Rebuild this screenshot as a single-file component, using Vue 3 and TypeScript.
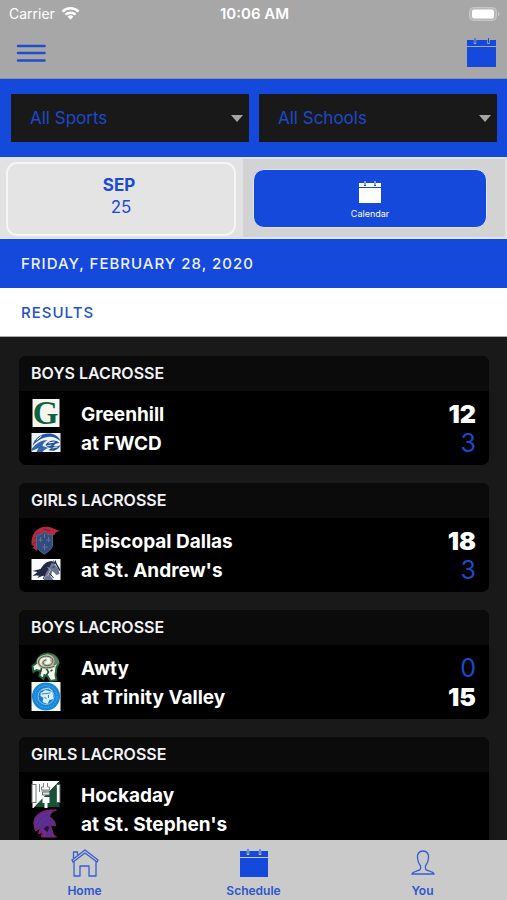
<script setup lang="ts">
import { ref } from 'vue'

type Logo = 'greenhill' | 'fwcd' | 'episcopal' | 'andrews' | 'awty' | 'trinity' | 'hockaday' | 'stephens'

interface Side {
  name: string
  logo: Logo
  score?: number
  won?: boolean
}

interface Game {
  id: number
  sport: string
  sides: Side[]
}

const sport = ref('All Sports')
const school = ref('All Schools')

const games: Game[] = [
  {
    id: 1,
    sport: 'BOYS LACROSSE',
    sides: [
      { name: 'Greenhill', logo: 'greenhill', score: 12, won: true },
      { name: 'at FWCD', logo: 'fwcd', score: 3 },
    ],
  },
  {
    id: 2,
    sport: 'GIRLS LACROSSE',
    sides: [
      { name: 'Episcopal Dallas', logo: 'episcopal', score: 18, won: true },
      { name: "at St. Andrew's", logo: 'andrews', score: 3 },
    ],
  },
  {
    id: 3,
    sport: 'BOYS LACROSSE',
    sides: [
      { name: 'Awty', logo: 'awty', score: 0 },
      { name: 'at Trinity Valley', logo: 'trinity', score: 15, won: true },
    ],
  },
  {
    id: 4,
    sport: 'GIRLS LACROSSE',
    sides: [
      { name: 'Hockaday', logo: 'hockaday' },
      { name: "at St. Stephen's", logo: 'stephens' },
    ],
  },
]
</script>

<template>
  <div class="screen">
    <header class="top">
      <div class="status">
        <span class="carrier">
          Carrier
          <svg class="wifi" viewBox="0 0 20 15" aria-hidden="true">
            <path d="M1.5 5.6a12 12 0 0 1 17 0" />
            <path d="M4.7 8.8a7.5 7.5 0 0 1 10.6 0" />
            <path class="solid" d="M10 14l-3-3.1a4.3 4.3 0 0 1 6 0z" />
          </svg>
        </span>
        <span class="clock">10:06 AM</span>
        <svg class="battery" viewBox="0 0 31 14" aria-hidden="true">
          <rect x="0.5" y="0.5" width="27" height="13" rx="4" fill="#b9b9b9" stroke="#c6c6c6" />
          <rect x="3" y="2.500" width="22" height="9" rx="2.500" fill="#fff" />
          <path d="M29 5c2 .6 2 3.400 0 4z" fill="#c6c6c6" />
        </svg>
      </div>
      <div class="nav">
        <button class="icon-button" type="button" aria-label="Menu">
          <svg class="menu-icon" viewBox="0 0 30 18">
            <path d="M2 2h26.500M2 9h26.500M2 16.500h26.500" stroke="#1f4fd0" stroke-width="2.500" stroke-linecap="round" />
          </svg>
        </button>
        <button class="icon-button" type="button" aria-label="Calendar view">
          <svg class="calendar-icon" viewBox="0 0 29 29">
            <path d="M0 2h29v6H0zM0 9h29v20H0z" fill="#1549dc" />
            <path d="M8 1v5M21.500 1v5" stroke="#a7a7a7" stroke-width="2.500" />
            <path d="M8 0v5M21.500 0v5" stroke="#1549dc" stroke-width="1" />
          </svg>
        </button>
      </div>
    </header>

    <section class="filters">
      <div class="picker">
        <select v-model="sport" aria-label="Sport">
          <option>All Sports</option>
          <option>Boys Lacrosse</option>
          <option>Girls Lacrosse</option>
        </select>
        <svg class="caret" viewBox="0 0 12 7" aria-hidden="true"><path d="M0 0h12L6 7z" /></svg>
      </div>
      <div class="picker">
        <select v-model="school" aria-label="School">
          <option>All Schools</option>
          <option>Greenhill</option>
          <option>Awty</option>
        </select>
        <svg class="caret" viewBox="0 0 12 7" aria-hidden="true"><path d="M0 0h12L6 7z" /></svg>
      </div>
    </section>

    <section class="dates">
      <div class="cell day-cell">
        <button class="day" type="button">
          <span class="month">SEP&nbsp;</span>
          <span class="number">25</span>
        </button>
      </div>
      <div class="cell calendar-cell">
        <button class="calendar" type="button">
          <svg class="calendar-small" viewBox="0 0 22 22" aria-hidden="true">
            <path d="M0 2h22v4H0zM0 7h22v15H0z" fill="#fff" />
            <path d="M6 1v4M16 1v4" stroke="#1549dc" stroke-width="2" />
            <path d="M6 0v4M16 0v4" stroke="#fff" stroke-width="1" />
          </svg>
          <span>Calendar</span>
        </button>
      </div>
    </section>

    <h1 class="banner">FRIDAY, FEBRUARY 28, 2020</h1>
    <h2 class="results">RESULTS</h2>

    <main class="games">
      <article v-for="game in games" :key="game.id" class="game">
        <h3>{{ game.sport }}</h3>
        <div class="sides">
          <div v-for="side in game.sides" :key="side.name" class="side">
            <svg class="logo" viewBox="0 0 29 29" aria-hidden="true">
              <g v-if="side.logo === 'greenhill'">
                <rect x="1" width="27" height="28" fill="#f7f5ee" />
                <text x="14" y="25" text-anchor="middle" class="serif-letter">G</text>
              </g>
              <g v-else-if="side.logo === 'fwcd'">
                <rect y="5" width="29" height="19" fill="#edf2f7" />
                <path d="M1 18C3 9 12 4 21 6c4 1 7 4 8 7-5-4-9-5-13-4C9 10 4 14 1 18z" fill="#24569a" />
                <path d="M0 21c5-6 10-9 16-9-3 2-5 4-5 6l6 2c-3 1-5 2-6 4H5l2-4-7 3z" fill="#3167aa" />
                <path d="M14 17c3-5 10-6 14-2-3 0-5 1-6 3 3 1 5 0 7-1-2 5-8 7-12 5l3-2c-3 0-5-1-6-3z" fill="#245293" />
                <path d="M5 12l5-4M17 15l6-1" stroke="#fff" />
                <path d="M15 18l5-1M21 20l5-1" stroke="#c9dced" />
              </g>
              <g v-else-if="side.logo === 'episcopal'">
                <path d="M0 19C-1 7 7-1 18 1l5 2 6 2c-3 0-5 1-6 4L8 12l-3 4 1 9-5-3 2-2z" fill="#b42b41" />
                <path d="M2 13l5-4M1 18l5-3M4 9l4-3M12 3l7 2" stroke="#721f34" />
                <path d="M5 9c5 0 6-2 8-3 2 2 4 3 8 3v10c0 4-5 7-8 9-4-2-8-5-8-9z" fill="#304d80" stroke="#53698c" />
                <path d="M9 11v5M7 14h4M17 11v5M15 14h4M13 18v6M11 21h5M13 8v4" stroke="#716f8b" />
              </g>
              <g v-else-if="side.logo === 'andrews'">
                <rect y="4" width="29" height="21" fill="#fbfbff" />
                <path d="M5 21l7-7 2-4 6-3 2-2 1 4 4 5 1 5-3 1-4-4-2 5 3 4H12l2-4z" fill="#6c7690" />
                <path d="M20 6c-7 1-8 4-11 8l-8 2 5 1-5 4 7-1-2 3 7-3 4-6 3-6 4 1 4 7 1-1-4-7-1-3-2 3z" fill="#222944" />
                <path d="M14 17l-2 7M18 18l4 5M21 12h2" stroke="#20263e" />
                <path d="M16 12l3 3-3 6" fill="none" stroke="#b5bdce" />
              </g>
              <g v-else-if="side.logo === 'awty'">
                <path d="M5 10C6 3 13-1 19 1c7 2 8 6 8 10l-2 3-1 8 1 5-6 1-3-5-3-1-1 4-4-3 1-5-4-1-3 2-1-6z" fill="#f7f7ed" stroke="#236842" stroke-width="2" />
                <path d="M19 1c6 2 8 5 9 9l-6 3-3-5z" fill="#667f6c" />
                <path d="M23 13c-9 4-16 1-16-4 0-6 11-8 14-3 2 5-4 8-8 6-3-2-1-5 2-5" fill="none" stroke="#c3baa1" stroke-width="3" />
                <path d="M23 13c-9 4-16 1-16-4 0-6 11-8 14-3 2 5-4 8-8 6-3-2-1-5 2-5" fill="none" stroke="#3c684c" />
                <path d="M15 16l2 3-2 3M19 18l2-1M10 15l-1 4" fill="none" stroke="#174c31" stroke-width="1.500" />
              </g>
              <g v-else-if="side.logo === 'trinity'">
                <rect width="29" height="29" fill="#f4f8fc" />
                <circle cx="14.500" cy="14.500" r="14" fill="#1687d8" />
                <circle cx="14.500" cy="14.500" r="11" fill="none" stroke="#66b5e9" stroke-dasharray="1 1" />
                <circle cx="14.500" cy="14.500" r="8" fill="#1979ca" stroke="#86c5ef" />
                <path d="M9 11l5-3 7 2 1 7-4 1-2 4-5-2 1-4-3-2z" fill="#d9edfa" />
                <path d="M10 12l9-1M17 13v3M13 15l2 2" stroke="#2c87cb" />
                <path d="M10 8l7-2 4 3" fill="none" stroke="#b5dcf5" />
              </g>
              <g v-else-if="side.logo === 'hockaday'">
                <path d="M1 1h27L2 28H1z" fill="#fff" />
                <path d="M28 1v26H3z" fill="#155238" />
                <rect x="0.500" y="4.500" width="4" height="18" fill="#fff" stroke="#777" />
                <rect x="25" y="4.500" width="3.500" height="18" fill="#fff" stroke="#4a6656" />
                <path d="M8 4v8M10 11h8M12 3v4h-2v3h8V7h-2V3" fill="none" stroke="#7c837e" />
                <path d="M11 12h7v3h-7z" fill="#dfe7e2" stroke="#68716b" />
                <path d="M11 17h7v6h-2v5h-3v-5h-2z" fill="#fff" />
              </g>
              <g v-else>
                <path d="M3 18C0 7 9 0 25 1c-4 1-6 3-7 7 4 2 6 5 6 9l-5-1 3 10 3 2H10l1-5-4 2 2-6-5 3z" fill="#592d91" stroke="#8e2360" />
                <path d="M5 14c1-6 6-10 14-11M8 15c2-3 4-5 8-7M12 15l5 1" fill="none" stroke="#6d3394" />
                <path d="M15 17l3 1-2 5-4-3z" fill="#271435" />
                <path d="M11 20l3 4-2 4" fill="none" stroke="#8e2f79" />
              </g>
            </svg>
            <span class="name">{{ side.name }}</span>
            <span class="score" :class="{ won: side.won }">{{ side.score }}</span>
          </div>
        </div>
      </article>
    </main>

    <nav class="tabs">
      <a href="#home">
        <svg class="tab-icon" viewBox="0 0 28 28" aria-hidden="true">
          <g fill="none" stroke="#365dce" stroke-width="1.300" stroke-linejoin="round">
            <path d="M1 11L14 1l13 10-1 2L14 4 2 13z" />
            <path d="M2.500 9V3h4v3" />
            <path d="M3 12.500V27h6V17h9v10h7V12.500" />
          </g>
        </svg>
        <span>Home</span>
      </a>
      <a href="#schedule" aria-current="page">
        <svg class="tab-icon" viewBox="0 0 28 28" aria-hidden="true">
          <path d="M0 2h28v6H0zM0 9h28v19H0z" fill="#1549dc" />
          <path d="M8 1v5M20 1v5" stroke="#cacaca" stroke-width="2.500" />
          <path d="M8 0v5M20 0v5" stroke="#1549dc" stroke-width="1" />
        </svg>
        <span>Schedule</span>
      </a>
      <a href="#you">
        <svg class="tab-icon" viewBox="0 0 28 28" aria-hidden="true">
          <path d="M14 2c-4 0-6 3-5.500 7 .2 4 1.500 6 3 8 1 5-2 4-5 5.500-2 .8-3.500 1-3.500 2.500h22c0-1.500-1.500-1.700-3.500-2.500-3-1.500-6-.5-5-5.500 1.500-2 2.800-4 3-8C20 5 18 2 14 2z" fill="none" stroke="#365dce" stroke-width="1.300" />
        </svg>
        <span>You</span>
      </a>
    </nav>
  </div>
</template>

<style>
body {
  margin: 0;
}
</style>

<style scoped>
.screen {
  height: 100vh;
  display: flex;
  flex-direction: column;
  overflow: hidden;
  background: #191919;
  color: #fff;
  font-family: Inter, "Liberation Sans", sans-serif;
}

.screen * {
  box-sizing: border-box;
}

button {
  padding: 0;
  border: 0;
  background: none;
  font: inherit;
  cursor: pointer;
}

svg {
  display: block;
}

h1, h2, h3 {
  margin: 0;
}

.top {
  flex: none;
  background: #a7a7a7;
  border-bottom: 1px solid #8791ae;
}

.status {
  display: grid;
  grid-template-columns: 1fr auto 1fr;
  align-items: center;
  height: 27px;
  padding: 0 7px 0 9px;
  font-size: 15px;
}

.carrier {
  display: flex;
  align-items: center;
  gap: 6px;
  font-size: 14px;
}

.wifi {
  width: 19px;
  height: 15px;
  fill: none;
  stroke: #fff;
  stroke-width: 2.6;
}

.wifi .solid {
  fill: #fff;
  stroke: none;
}

.clock {
  font-weight: 600;
}

.battery {
  justify-self: end;
  width: 31px;
  height: 14px;
}

.nav {
  display: flex;
  align-items: center;
  justify-content: space-between;
  height: 51px;
  padding: 0 11px 0 16px;
}

.menu-icon {
  width: 30px;
  height: 18px;
}

.calendar-icon {
  width: 29px;
  height: 29px;
}

.filters {
  flex: none;
  display: grid;
  grid-template-columns: 1fr 1fr;
  gap: 10px;
  padding: 15px 10px 15px 11px;
  background: #1549dc;
}

.picker {
  position: relative;
}

.picker select {
  display: block;
  width: 100%;
  height: 48px;
  padding: 0 32px 0 19px;
  border: 0;
  border-radius: 0;
  appearance: none;
  background: #191919;
  color: #1c4acb;
  font: 400 17px Inter, "Liberation Sans", sans-serif;
}

.caret {
  position: absolute;
  right: 6px;
  top: 21px;
  width: 12px;
  height: 7px;
  fill: #a5a5a5;
  pointer-events: none;
}

.dates {
  flex: none;
  display: grid;
  grid-template-columns: 243fr 264fr;
  height: 82px;
  border-top: 2px solid #dfe5f2;
  border-bottom: 2px solid #dfe5f2;
  background: #d3d3d3;
}

.day-cell {
  padding: 3px 7px 1px 6px;
  background: #e2e2e2;
}

.day {
  display: flex;
  flex-direction: column;
  align-items: center;
  justify-content: center;
  width: 100%;
  height: 74px;
  padding-bottom: 6px;
  border: 2px solid #f5f5f5;
  border-radius: 11px;
  background: #e4e4e4;
  color: #1b4bd2;
  font-size: 17px;
  line-height: 22px;
}

.month {
  font-weight: 700;
}

.calendar-cell {
  padding: 10px 18px 10px 10px;
  border-right: 2px solid #e2e2e2;
}

.calendar {
  display: flex;
  flex-direction: column;
  align-items: center;
  justify-content: center;
  gap: 5px;
  width: 100%;
  height: 59px;
  padding-top: 3px;
  border: 1px solid #dce4f8;
  border-radius: 11px;
  background: #1549dc;
  color: #fff;
  font-size: 9px;
  line-height: 12px;
}

.calendar-small {
  width: 22px;
  height: 22px;
}

.banner,
.results {
  flex: none;
  height: 49px;
  padding-left: 21px;
  font-size: 15px;
  font-weight: 500;
  line-height: 49px;
  letter-spacing: 1px;
}

.banner {
  background: #1549dc;
  color: #eef2ff;
}

.results {
  border-bottom: 1px solid #aaa;
  background: #fff;
  color: #2450d0;
}

.games {
  flex: 1;
  min-height: 0;
  display: flex;
  flex-direction: column;
  gap: 18px;
  padding: 19px 18px 0 19px;
  overflow: hidden;
}

.game {
  flex: none;
  overflow: hidden;
  border-radius: 7px;
  background: #000;
}

.game h3 {
  height: 35px;
  padding-left: 12px;
  background: #0b0b0b;
  color: #f3f3f7;
  font-size: 16px;
  font-weight: 600;
  line-height: 35px;
}

.sides {
  padding: 8px 13px 8px 12px;
}

.side {
  display: grid;
  grid-template-columns: 30px 1fr auto;
  align-items: center;
  column-gap: 20px;
  height: 29px;
}

.logo {
  width: 30px;
  height: 29px;
  overflow: visible;
}

.serif-letter {
  fill: #0c6340;
  font: 700 33px "Liberation Serif", serif;
}

.name,
.score {
  padding-top: 2px;
  line-height: 27px;
}

.name {
  font-size: 19px;
  font-weight: 700;
}

.score {
  color: #1c49ca;
  font-size: 25px;
}

.score.won {
  color: #fff;
  font-weight: 900;
}

.tabs {
  flex: none;
  display: grid;
  grid-template-columns: repeat(3, 1fr);
  height: 60px;
  background: #cacaca;
}

.tabs a {
  display: flex;
  flex-direction: column;
  align-items: center;
  gap: 5px;
  padding-top: 9px;
  color: #2b55d0;
  font-size: 12px;
  font-weight: 600;
  line-height: 17px;
  text-decoration: none;
}

.tab-icon {
  width: 28px;
  height: 28px;
}
</style>
